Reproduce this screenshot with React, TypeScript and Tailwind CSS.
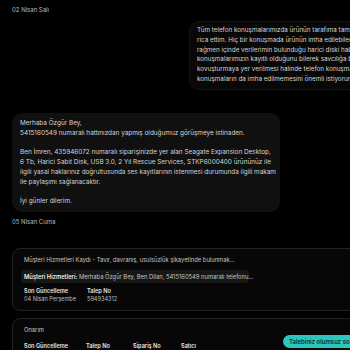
import React from "react";

const rightLines = [
  "Tüm telefon konuşmalarımızda ürünün tarafıma tam olarak iletilmesini",
  "rica ettim. Hiç bir konuşmada ürünün imha edilebileceği söylenmedi. Buna",
  "rağmen içinde verilerimin bulunduğu harici diski haber vermeden imha",
  "konuşmalarımızın kayıtlı olduğunu bilerek savcılığa başvuracağım.",
  "kovuşturmaya yer verilmesi halinde telefon konuşmalarımın",
  "konuşmaların da imha edilmemesini önemli istiyorum.",
];

const App: React.FC = () => {
  return (
    <div className="h-[350px] w-[350px] overflow-hidden bg-black font-['Inter',sans-serif] text-[#d6d6d6]">
      <div className="w-[480px] px-3 pt-[6px]">
        <p className="text-[6px] leading-[7px] text-[#bcbcbc]">02 Nisan Salı</p>

        <div className="mt-[8px] flex justify-end">
          <div className="w-[279px] rounded-[10px] border border-[#141414] bg-[#080808] px-[7px] pt-[4px] pb-[4px] text-[6.3px] leading-[9.8px]">
            {rightLines.map((l) => (
              <div key={l} className="whitespace-nowrap">{l}</div>
            ))}
          </div>
        </div>

        <div className="mt-[23px] w-[268px] rounded-[10px] bg-[#101010] px-[8px] pt-[6px] pb-[5px] text-[6.4px] leading-[9.8px]">
          <div>Merhaba Özgür Bey,</div>
          <div className="whitespace-nowrap">5415160549 numaralı hattınızdan yapmış olduğumuz görüşmeye istinaden.</div>
          <div className="mt-[9.8px] whitespace-nowrap">
            Ben İmren, 435946072 numaralı siparişinizde yer alan Seagate Expansion Desktop,
          </div>
          <div className="whitespace-nowrap">
            6 Tb, Harici Sabit Disk, USB 3.0, 2 Yıl Rescue Services, STKP6000400 ürününüz ile
          </div>
          <div className="whitespace-nowrap">
            ilgili yasal haklarınız doğrultusunda ses kayıtlarının istenmesi durumunda ilgili makam
          </div>
          <div>ile paylaşımı sağlanacaktır.</div>
          <div className="mt-[9.8px]">İyi günler dilerim.</div>
        </div>

        <p className="mt-[6px] text-[6px] leading-[7px] text-[#bcbcbc]">05 Nisan Cuma</p>

        <div className="mt-[23px] rounded-[8px] border border-[#222] bg-[#070707] px-[11px] pt-[7px] pb-[7px]">
          <div className="whitespace-nowrap text-[5.8px] leading-[8px] text-[#c4c4c4]">
            Müşteri Hizmetleri Kaydı - Tavır, davranış, usulsüzlük şikayetinde bulunmak...
          </div>
          <div className="mt-[6px] -ml-[3px] h-[13px] w-[228px] whitespace-nowrap rounded-[3px] bg-[#161616] px-[3px] text-[5.8px] leading-[13px] text-[#c4c4c4]">
            <span className="font-semibold text-[#ececec]">Müşteri Hizmetleri:</span> Merhaba Özgür Bey, Ben Dilan, 5415160549 numaralı telefonu...
          </div>
          <div className="mt-[4px] flex text-[5.6px] leading-[8px]">
            <div className="w-[63px] whitespace-nowrap">
              <div className="font-semibold text-[#e6e6e6]">Son Güncelleme</div>
              <div className="text-[#bdbdbd]">04 Nisan Perşembe</div>
            </div>
            <div className="whitespace-nowrap">
              <div className="font-semibold text-[#e6e6e6]">Talep No</div>
              <div className="text-[#bdbdbd]">594934312</div>
            </div>
          </div>
        </div>

        <div className="mt-[7px] rounded-[8px] border border-[#222] bg-[#070707] px-[11px] pt-[7px] pb-[8px]">
          <div className="text-[5.8px] leading-[8px] text-[#c4c4c4]">Onarım</div>
          <div className="mt-[8px] flex items-start text-[5.6px] leading-[8px]">
            <div className="w-[62px] whitespace-nowrap">
              <div className="font-semibold text-[#e6e6e6]">Son Güncelleme</div>
              <div className="text-[#bdbdbd]">03 Nisan Çarşamba</div>
            </div>
            <div className="w-[47px] whitespace-nowrap">
              <div className="font-semibold text-[#e6e6e6]">Talep No</div>
              <div className="text-[#bdbdbd]">543731405</div>
            </div>
            <div className="w-[48px] whitespace-nowrap">
              <div className="font-semibold text-[#e6e6e6]">Sipariş No</div>
              <div className="text-[#bdbdbd]">435946072</div>
            </div>
            <div className="w-[102px] whitespace-nowrap">
              <div className="font-semibold text-[#e6e6e6]">Satıcı</div>
              <div className="text-[#bdbdbd]">Hepsiburada</div>
            </div>
            <div className="-mt-[7px] whitespace-nowrap rounded-full bg-[#2cc6c1] px-[6px] py-[3px] text-[6px] font-semibold leading-[7px] text-[#06302f]">
              Talebiniz olumsuz sonuçlandı
            </div>
          </div>
        </div>
      </div>
    </div>
  );
};

export default App;
